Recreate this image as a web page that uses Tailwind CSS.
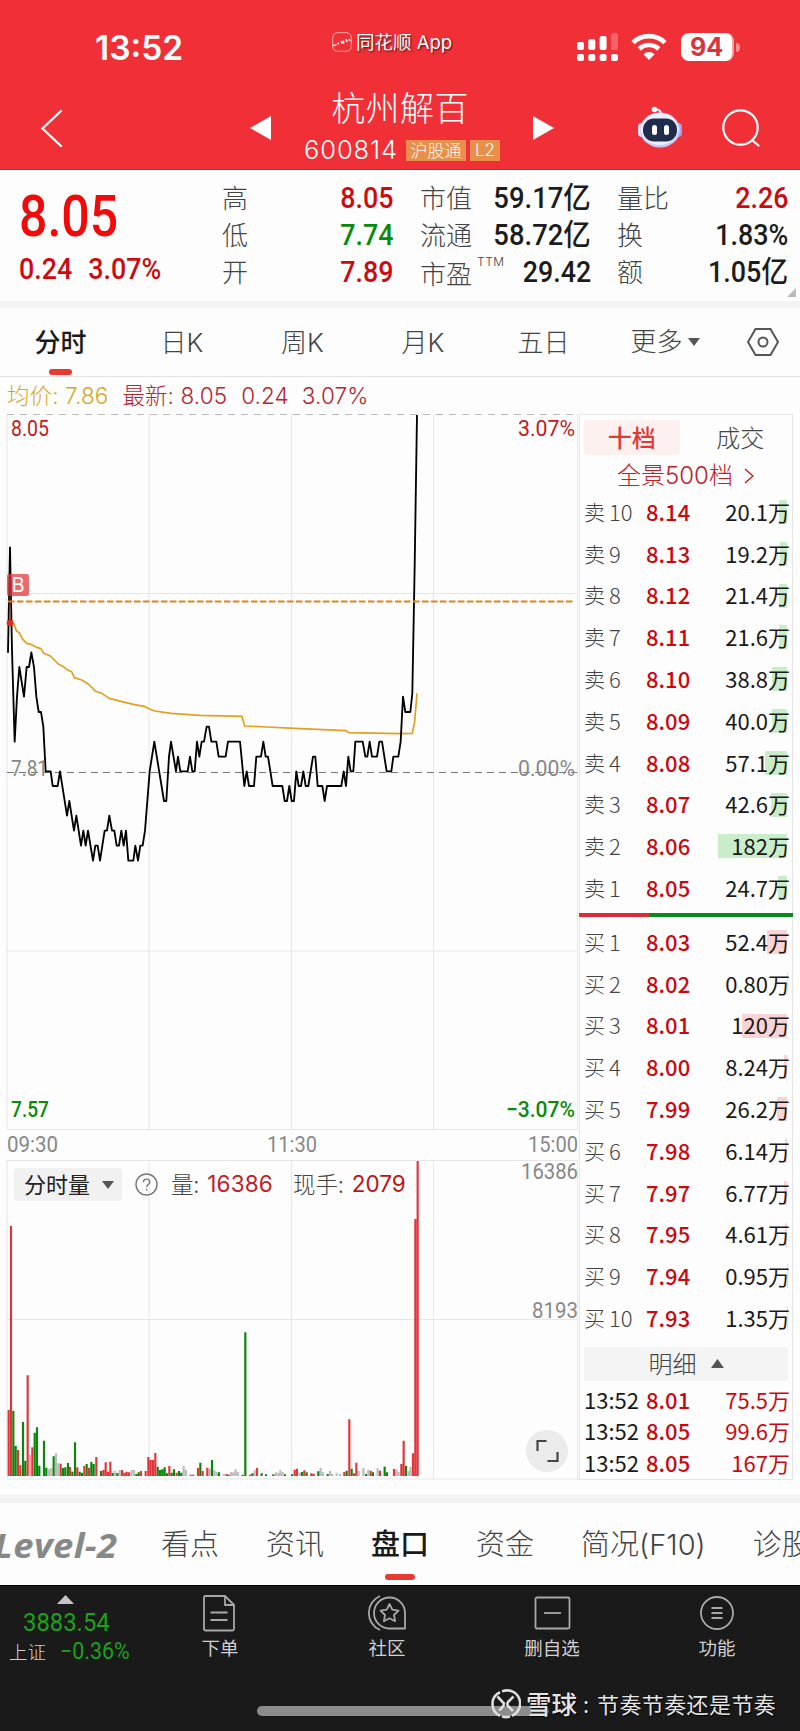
<!DOCTYPE html>
<html lang="zh-CN">
<head>
    <meta charset="UTF-8">
    <meta name="viewport" content="width=device-width, initial-scale=1.0">
    <title>杭州解百 600814</title>
    <script src="https://cdn.jsdelivr.net/npm/@tailwindcss/browser@4"></script>
    <style>
        body { font-family: 'Noto Sans CJK SC', sans-serif; }
        .din { font-family: Roboto, 'Noto Sans CJK SC', sans-serif; }
        .inter { font-family: Inter, 'Noto Sans CJK SC', sans-serif; }
    </style>
</head>
<body class="w-[800px] h-[1731px] overflow-hidden bg-[#fdfdfd] text-[#444]">

    <!-- Header -->
    <header class="h-[170px] bg-[#f03036] border-b border-[#c8282e] text-white">
        <div class="h-[88px] flex items-start">
            <div class="inter w-[332px] pl-[95px] pt-[30px] text-[33.500px] leading-[36px] font-semibold">13:52</div>
            <div class="w-[245px] pt-[30px] flex items-center gap-[4px]">
                <svg class="w-5 h-5" viewBox="0 0 20 20" fill="none" stroke="#fff">
                    <rect x=".7" y=".7" width="18.6" height="18.6" rx="5" stroke-opacity=".6"/>
                    <path d="M1 13.500l3.500-.5M5.500 11l1.500 1M9 9l1.500 2.500M11.500 8.500v3M14 7l1 3M16.500 7.500l2 1" stroke-width="1.600"/>
                </svg>
                <span class="inter text-[18.500px] leading-6 [text-shadow:1px_1px_2px_rgba(0,0,0,.7)]">同花顺 App</span>
            </div>
            <div class="pt-[32px] flex">
                <svg class="w-[42px] h-[30px]" viewBox="0 0 42 30" fill="#fff">
                    <rect x="0" y="10" width="7" height="8" rx="2"/>
                    <rect x="11.3" y="7" width="7" height="11" rx="2"/>
                    <rect x="22.6" y="4" width="7" height="14" rx="2"/>
                    <rect x="34" y="1" width="7" height="17" rx="2" opacity=".25"/>
                    <rect x="0" y="22" width="7" height="7" rx="2"/>
                    <rect x="11.3" y="22" width="7" height="7" rx="2"/>
                    <rect x="22.6" y="22" width="7" height="7" rx="2"/>
                    <rect x="34" y="22" width="7" height="7" rx="2"/>
                </svg>
                <svg class="ml-[12px] w-[36px] h-[28px]" viewBox="0 0 36 28" fill="none" stroke="#fff" stroke-width="4.6">
                    <path d="M2 10.6a23 23 0 0 1 32 0"/>
                    <path d="M8.2 17a14 14 0 0 1 19.600 0"/>
                    <path d="M18 28l-5.600-5.800a8.200 8.200 0 0 1 11.200 0z" fill="#fff" stroke="none"/>
                </svg>
                <div class="inter ml-[14px] mt-px w-[53px] h-[28px] rounded-[8px] bg-white text-[#d9343a] text-[25px] leading-[28px] font-bold text-center border-r-2 border-[#f8a0a3]">94</div>
                <div class="ml-[2px] mt-[11px] w-[4px] h-[9px] rounded-r-full bg-white/45"></div>
            </div>
        </div>
        <div class="h-[80px] flex items-start">
            <svg class="ml-[41px] mt-[21px] w-[22px] h-[38px]" viewBox="0 0 22 38" fill="none" stroke="#fff" stroke-width="2.3" stroke-linecap="round"><path d="M20 2L1.500 19.500l18.500 17.500"/></svg>
            <svg class="ml-[187px] mt-[28px] w-[21px] h-[24px]" viewBox="0 0 21 24" fill="#fff"><path d="M0 12L21 0v24z"/></svg>
            <div class="w-[262px] flex flex-col items-center">
                <h1 class="-ml-[4px] text-[34px] leading-[38px] font-light tracking-[.4px]">杭州解百</h1>
                <div class="mt-[11px] flex items-center">
                    <span class="inter text-[25.500px] leading-[26px] font-light tracking-[.9px]">600814</span>
                    <span class="ml-[8px] w-[60px] h-[21px] bg-[#e8904a] text-[17px] leading-[20px] text-center font-light">沪股通</span>
                    <span class="inter ml-[4px] w-[30px] h-[21px] bg-[#e8904a] text-[17px] leading-[21px] text-center font-light">L2</span>
                </div>
            </div>
            <svg class="mt-[28px] w-[21px] h-[24px]" viewBox="0 0 21 24" fill="#fff"><path d="M21 12L0 0v24z"/></svg>
            <svg class="ml-[83px] mt-[18px] w-[46px] h-[42px]" viewBox="0 0 46 42">
                <path d="M24 8c0-3-2-4.500-5-4.500" fill="none" stroke="#e6ddf8" stroke-width="2"/>
                <circle cx="17.500" cy="3.500" r="2.800" fill="#fff"/>
                <rect x="1" y="17" width="8" height="14" rx="4" fill="#dfe0fb"/>
                <rect x="37" y="17" width="8" height="14" rx="4" fill="#9fa4f4"/>
                <ellipse cx="23" cy="24" rx="20" ry="17.500" fill="#c9c9f8"/>
                <ellipse cx="22.500" cy="23" rx="19" ry="16" fill="#efeffe"/>
                <rect x="6" y="12.500" width="34" height="23" rx="11" fill="#202c4c"/>
                <rect x="15" y="19" width="5" height="10" rx="2.500" fill="#fff"/>
                <rect x="27" y="19" width="5" height="10" rx="2.500" fill="#fff"/>
            </svg>
            <svg class="ml-[38px] mt-[20px] w-[40px] h-[40px]" viewBox="0 0 40 40" fill="none" stroke="#fff" stroke-width="2.200" stroke-linecap="round"><circle cx="19.500" cy="19.500" r="17.200"/><path d="M31 32l6.500 5.500"/></svg>
        </div>
    </header>

    <!-- Quote summary -->
    <section class="relative h-[131px] flex text-[26px] leading-[37px] font-light">
        <div class="din w-[222px] pl-[19px] pt-[17px]">
            <div class="text-[57.5px] leading-[60px] font-medium text-[#f00a0a] origin-left scale-x-[.87]">8.05</div>
            <div class="mt-[3px] text-[29.5px] leading-[38px] font-medium text-[#cc0a10] origin-left scale-x-[.91] whitespace-pre">0.24  <span class="ml-[3px]">3.07%</span></div>
        </div>
        <div class="w-[171px] pt-[10px]">
            <div class="flex justify-between"><span class="-mt-[2px]">高</span><b class="din text-[29.5px] font-medium text-[#cc0a10] origin-right scale-x-[.91]">8.05</b></div>
            <div class="flex justify-between"><span class="-mt-[2px]">低</span><b class="din text-[29.5px] font-medium text-[#0a8a0a] origin-right scale-x-[.91]">7.74</b></div>
            <div class="flex justify-between"><span class="-mt-[2px]">开</span><b class="din text-[29.5px] font-medium text-[#cc0a10] origin-right scale-x-[.91]">7.89</b></div>
        </div>
        <div class="ml-[27px] w-[171px] pt-[10px]">
            <div class="flex justify-between"><span class="-mt-[2px]">市值</span><b class="din text-[29.5px] font-medium text-[#1c1c1c] origin-right scale-x-[.93]">59.17亿</b></div>
            <div class="flex justify-between"><span class="-mt-[2px]">流通</span><b class="din text-[29.5px] font-medium text-[#1c1c1c] origin-right scale-x-[.93]">58.72亿</b></div>
            <div class="flex justify-between"><span class="flex items-start"><span>市盈</span><span class="inter ml-[5px] mt-[-2px] text-[12px] leading-[20px] tracking-[.5px]">TTM</span></span><b class="din text-[29.5px] font-medium text-[#1c1c1c] origin-right scale-x-[.91]">29.42</b></div>
        </div>
        <div class="ml-[26px] w-[171px] pt-[10px]">
            <div class="flex justify-between"><span class="-mt-[2px]">量比</span><b class="din text-[29.5px] font-medium text-[#cc0a10] origin-right scale-x-[.91]">2.26</b></div>
            <div class="flex justify-between"><span class="-mt-[2px]">换</span><b class="din text-[29.5px] font-medium text-[#1c1c1c] origin-right scale-x-[.91]">1.83%</b></div>
            <div class="flex justify-between"><span class="-mt-[2px]">额</span><b class="din text-[29.5px] font-medium text-[#1c1c1c] origin-right scale-x-[.91]">1.05亿</b></div>
        </div>
        <svg class="absolute right-[4px] bottom-[4px] w-[9px] h-[9px]" viewBox="0 0 9 9"><path d="M9 0v9H0z" fill="#bbb"/></svg>
    </section>
    <div class="h-[7px] bg-[#f3f3f3]"></div>

    <!-- Period tabs -->
    <nav class="inter h-[69px] border-b border-[#e4e4e4] flex text-[26px] leading-[70px] font-light text-center">
        <div class="relative w-[121px] font-medium text-[#1a1a1a]">分时<i class="absolute left-[49px] bottom-[1px] w-[23px] h-[6px] rounded-full bg-[#e93a32]"></i></div>
        <div class="w-[122px]">日K</div>
        <div class="w-[119px]">周K</div>
        <div class="w-[122px]">月K</div>
        <div class="w-[119px]">五日</div>
        <div class="w-[124px] flex justify-center items-center gap-[5px]">更多<svg class="w-[12px] h-[8px]" viewBox="0 0 12 8"><path d="M0 0h12L6 8z" fill="#555"/></svg></div>
        <div class="w-[72px] flex justify-center items-center">
            <svg class="w-[32px] h-[28px]" viewBox="0 0 32 28" fill="none" stroke="#555" stroke-width="2"><path d="M8.500 1h15L31 14l-7.500 13h-15L1 14z"/><circle cx="16" cy="14" r="4.500"/></svg>
        </div>
    </nav>

    <div class="inter h-[37px] pl-[7px] flex text-[22.500px] leading-[38px] font-light">
        <span class="text-[#d6a91c] whitespace-pre tracking-[.1px]">均价: 7.86</span>
        <span class="ml-[14px] text-[#b32630] whitespace-pre tracking-[.1px]">最新: 8.05</span>
        <span class="ml-[14px] text-[#b32630] tracking-[.1px]">0.24</span>
        <span class="ml-[13px] text-[#b32630] tracking-[.1px]">3.07%</span>
    </div>

    <main class="flex h-[1066px]">
        <!-- Intraday price and volume -->
        <div class="relative w-[579px]">
            <svg class="din block w-[579px] h-[1066px] overflow-visible" viewBox="0 414 579 1066" fill="none">
                <g stroke="#e6e6e6">
                    <path d="M7 414V1129.500M149 414V1129.500M291.500 414V1129.500M433.500 414V1129.500M577.500 414V1129.500"/>
                    <path d="M7 593.500H577M7 951H577M7 1129.500H577"/>
                    <path d="M7 1160V1479M149 1160V1479M291.500 1160V1479M433.500 1160V1479M577.500 1160V1479"/>
                    <path d="M7 1160.500H577M7 1319.500H577M7 1479H579"/>
                </g>
                <path d="M7 414.500H577" stroke="#bbb" stroke-dasharray="7 6"/>
                <path d="M7 772.500H577" stroke="#777" stroke-dasharray="7 5"/>

                <g transform="translate(0 400) scale(.33333)" stroke-linejoin="round">
                    <polyline stroke="#e0a020" stroke-width="5" points="30,655 40,668 50,694 58,698 66,715 80,730 95,734 110,742 123,746 131,760 151,768 175,792 190,800 204,811 215,815 223,833 245,840 265,852 287,874 305,880 328,895 375,907 400,913 433,919 450,928 465,933 513,940 600,946 726,949 734,978 800,981 900,986 1038,992 1046,998 1200,1001 1237,1000 1244,965 1251,880"/>
                    <polyline stroke="#000" stroke-width="5.500" points="24,758 30,442 36,750 44,1025 51,890 58,801 72,890 80,801 87,801 94,757 102,801 109,890 116,936 123,936 130,980 137,1114 152,1114 158,1158 173,1158 180,1114 201,1247 208,1203 222,1292 229,1247 243,1337 250,1292 257,1337 264,1292 279,1382 286,1337 293,1337 300,1382 314,1292 321,1292 328,1247 336,1292 343,1292 350,1337 357,1337 364,1292 371,1337 378,1292 385,1382 400,1382 406,1337 414,1382 421,1337 428,1337 435,1292 449,1114 463,1025 492,1203 499,1203 507,1070 513,1025 528,1114 534,1070 541,1114 563,1114 570,1070 577,1114 584,1114 591,1025 598,1070 605,1025 612,1025 620,980 627,980 634,1025 649,1025 656,1070 677,1070 684,1025 720,1025 733,1158 740,1114 747,1158 762,1158 769,1070 783,1070 790,1025 797,1070 804,1070 818,1158 847,1158 854,1203 861,1203 868,1158 875,1203 882,1203 889,1114 896,1158 903,1158 910,1114 917,1158 925,1158 939,1070 946,1070 953,1158 967,1158 974,1203 981,1158 1024,1158 1031,1114 1038,1158 1045,1070 1052,1114 1060,1114 1066,1025 1088,1025 1096,1070 1102,1070 1109,1025 1116,1070 1131,1070 1138,1025 1146,1025 1160,1114 1174,1114 1180,1070 1195,1070 1202,1025 1209,890 1216,936 1231,936 1237,880 1244,500 1251,45"/>
                </g>
                <path d="M8 601.500H575" stroke="#e0851c" stroke-width="1.800" stroke-dasharray="6.500 2.500"/>

                <!-- buy marker -->
                <rect x="7" y="574" width="22" height="22" rx="2" fill="#e0393e" fill-opacity=".75"/>
                <text x="11.500" y="592" font-size="20" fill="#fff" class="inter">B</text>
                <path d="M10 596V622" stroke="#d33" stroke-opacity=".5"/>
                <circle cx="10" cy="623" r="3.300" fill="#e42a22"/>

                <g font-size="22">
                    <text x="11" y="436" textLength="38" lengthAdjust="spacingAndGlyphs" fill="#c01a20">8.05</text>
                    <text x="518" y="436" textLength="57" lengthAdjust="spacingAndGlyphs" fill="#c01a20">3.07%</text>
                    <text x="11" y="776" textLength="37" lengthAdjust="spacingAndGlyphs" fill="#888">7.81</text>
                    <text x="518" y="776" textLength="57" lengthAdjust="spacingAndGlyphs" fill="#888">0.00%</text>
                    <text x="11" y="1116.500" textLength="38" lengthAdjust="spacingAndGlyphs" font-weight="500" fill="#0a8a0a">7.57</text>
                    <text x="506" y="1116.500" textLength="69" lengthAdjust="spacingAndGlyphs" font-weight="500" fill="#0a8a0a">−3.07%</text>
                    <text x="7" y="1152" textLength="51" lengthAdjust="spacingAndGlyphs" fill="#888">09:30</text>
                    <text x="267" y="1152" textLength="50" lengthAdjust="spacingAndGlyphs" fill="#888">11:30</text>
                    <text x="528" y="1152" textLength="50" lengthAdjust="spacingAndGlyphs" fill="#888">15:00</text>
                    <text x="521" y="1179" textLength="57" lengthAdjust="spacingAndGlyphs" fill="#888">16386</text>
                    <text x="532" y="1318" textLength="46" lengthAdjust="spacingAndGlyphs" fill="#888">8193</text>
                </g>

                <!-- volume bars: up / down / flat -->
                <g transform="translate(0 1090) scale(.33333)" stroke-width="6.500">
                    <path stroke="#bbb" d="M147 1158V1138M154 1158V1134M168 1158V1090M175 1158V1120M345 1158V1143M359 1158V1140M395 1158V1140M402 1158V1140M551 1158V1128M558 1158V1139M629 1158V1136M643 1158V1141M650 1158V1145M672 1158V1152M693 1158V1147M700 1158V1147M707 1158V1138M714 1158V1146M764 1158V1141M828 1158V1147M835 1158V1149M841 1158V1141M848 1158V1147M899 1158V1148M962 1158V1134M969 1158V1147M990 1158V1143M997 1158V1151M1010 1158V1150M1020 1158V1152M1076 1158V1143M1090 1158V1134M1105 1158V1139M1133 1158V1135M1189 1158V1138M1196 1158V1146M1226 1158V1143M1232 1158V1130"/>
                    <path stroke="#f3a6a8" d="M90 1158V1095"/>
                    <path stroke="#0a860a" d="M40 1158V962M47 1158V1068M69 1158V996M76 1158V1112M104 1158V1028M111 1158V1012M118 1158V1127M132 1158V1052M139 1158V1133M161 1158V1099M189 1158V1134M196 1158V1132M204 1158V1119M217 1158V1145M225 1158V1057M239 1158V1145M246 1158V1148M260 1158V1122M274 1158V1116M281 1158V1122M303 1158V1143M338 1158V1149M352 1158V1149M409 1158V1152M416 1158V1147M473 1158V1130M480 1158V1140M487 1158V1138M494 1158V1132M501 1158V1150M515 1158V1148M522 1158V1138M537 1158V1143M544 1158V1148M601 1158V1118M636 1158V1110M657 1158V1147M728 1158V1154M736 1158V727M757 1158V1150M785 1158V1150M798 1158V1153M820 1158V1153M855 1158V1153M876 1158V1153M906 1158V1146M920 1158V1147M955 1158V1144M983 1158V1152M1040 1158V1142M1055 1158V1136M1098 1158V1152M1119 1158V1147M1154 1158V1130M1161 1158V1147M1218 1158V1128"/>
                    <path stroke="#e2353a" d="M26 1158V960M33 1158V408M54 1158V1080M61 1158V1126M83 1158V856M97 1158V1072M182 1158V1121M210 1158V1131M232 1158V1132M253 1158V1128M267 1158V1133M289 1158V1101M310 1158V1140M317 1158V1117M324 1158V1145M331 1158V1115M366 1158V1140M373 1158V1148M380 1158V1145M387 1158V1147M423 1158V1143M437 1158V1143M445 1158V1101M452 1158V1110M459 1158V1110M466 1158V1089M508 1158V1128M530 1158V1148M572 1158V1154M580 1158V1154M594 1158V1134M608 1158V1143M622 1158V1133M680 1158V1152M686 1158V1154M750 1158V1154M771 1158V1134M884 1158V1139M891 1158V1136M913 1158V1141M934 1158V1150M941 1158V1151M1033 1158V1146M1048 1158V988M1062 1158V1150M1069 1158V1118M1112 1158V1142M1140 1158V1142M1182 1158V1137M1204 1158V1122M1211 1158V1052M1239 1158V1090M1246 1158V387M1253 1158V213"/>
                </g>
            </svg>

            <!-- volume indicator bar, floats over the volume plot -->
            <div class="absolute left-[14px] top-[754px] flex items-center text-[22.500px] leading-[32px] font-light">
                <div class="w-[108px] h-[33px] pl-[10px] rounded-[4px] bg-[#f1f1f1] text-[22px] text-[#222] font-normal flex items-center gap-[12px]"><span class="-mt-[4px]">分时量</span><svg class="w-[12px] h-[8px]" viewBox="0 0 12 8"><path d="M0 0h12L6 8z" fill="#555"/></svg></div>
                <svg class="ml-[13px] w-[23px] h-[23px]" viewBox="0 0 23 23" fill="none" stroke="#777" stroke-width="1.400"><circle cx="11.500" cy="11.500" r="10.500"/><path d="M8.300 9.200c0-4.200 6.500-4 6.500 0 0 2.300-3.200 2.400-3.200 5M11.600 15.700v1.700"/></svg>
                <span class="ml-[13px] -mt-[3px]">量:</span>
                <span class="inter ml-[8px] -mt-px font-normal text-[#c0202a] tracking-[.2px]">16386</span>
                <span class="ml-[20px] -mt-[3px]">现手:</span>
                <span class="inter ml-[8px] -mt-px font-normal text-[#c01018]">2079</span>
            </div>
            <div class="absolute left-[526px] top-[1016px] w-[42px] h-[42px] rounded-full bg-[#ebebeb]">
                <svg class="w-[42px] h-[42px]" viewBox="0 0 42 42" fill="none" stroke="#444" stroke-width="2.200"><path d="M11.500 21v-10h9M31.500 22v9h-10"/></svg>
            </div>
        </div>

        <!-- Order book -->
        <aside class="w-[214px] border border-[#e6e6e6] flex flex-col">
            <div class="mt-[5px] px-[4px] flex text-[24px] leading-[33px] text-center">
                <div class="w-[97px] h-[35px] rounded-[3px] bg-[#fdf1f0] font-medium text-[#e03a35]">十档</div>
                <div class="ml-[13px] w-[97px] font-light">成交</div>
            </div>
            <div class="inter h-[38px] pl-[37px] pt-[4px] flex items-center gap-[11px] text-[24px] font-light text-[#bf2029]">
                <span class="whitespace-nowrap">全景500档</span>
                <svg class="w-[10px] h-[16px]" viewBox="0 0 10 16" fill="none" stroke="#bf2029" stroke-width="1.400"><path d="M1 1l8 7-8 7"/></svg>
            </div>
            <div id="asks" class="mt-[-3px]"></div>
            <div class="mt-[5px] -mx-px h-[4px] flex"><i class="w-[70px] bg-[#d92b3a]"></i><i class="flex-1 bg-[#0a8a1a]"></i></div>
            <div id="bids" class="mt-[3px]"></div>
            <div class="mt-[9px] mx-[4px] h-[34px] bg-[#f4f4f4] flex items-center justify-center gap-[14px] text-[24px] leading-[30px] font-light"><span class="-mt-[2px]">明细</span><svg class="w-[13px] h-[9px]" viewBox="0 0 13 9"><path d="M0 9h13L6.500 0z" fill="#555"/></svg></div>
            <div id="trades" class="mt-[2px]"></div>
        </aside>
    </main>

    <div class="mt-[15px] h-[8px] bg-[#f3f3f3]"></div>

    <!-- Section tabs -->
    <nav class="inter h-[82px] flex text-[29px] leading-[84px] font-light whitespace-nowrap overflow-hidden">
        <div class="w-[161px] shrink-0 flex justify-end pr-[44px] text-[#888] font-bold italic [font-family:'Open_Sans'] text-[34px] tracking-[.4px]"><span class="origin-right scale-x-[1.07]">Level-2</span></div>
        <div class="flex gap-[47px]">
            <span>看点</span>
            <span>资讯</span>
            <span class="relative font-medium text-[#1a1a1a]">盘口<i class="absolute left-[14px] top-[71px] w-[30px] h-[6px] rounded-full bg-[#e93a32]"></i></span>
            <span>资金</span>
            <span>简况(F10)</span>
            <span>诊股</span>
        </div>
    </nav>

    <!-- Bottom bar -->
    <footer class="relative h-[146px] bg-[#1a1a1a] border-t border-black text-[#d0d0d0] flex text-[18.500px] leading-[24px]">
        <div class="w-[136px] pt-[9px]">
            <svg class="ml-[57px] w-[17px] h-[9px]" viewBox="0 0 17 9"><path d="M0 9h17L8.500 0z" fill="#c4c4c4"/></svg>
            <div class="din ml-[23px] mt-[5px] text-[26.500px] leading-[26px] text-[#1ea01e] origin-left scale-x-[.9]">3883.54</div>
            <div class="ml-[9px] mt-[4px] flex items-center font-light"><span class="-mt-[3px] w-[51px]">上证</span><span class="din text-[23px] font-normal leading-[26px] text-[#1ea01e] origin-left scale-x-[.93]">−0.36%</span></div>
        </div>
        <div class="w-[168px] pt-[8px] flex flex-col items-center">
            <svg class="w-[34px] h-[38px] -ml-[3px]" viewBox="0 0 34 38" fill="none" stroke="#a8a8a8" stroke-width="1.800" stroke-linejoin="round"><path d="M3.500 2H23l9 9v24a1.500 1.500 0 0 1-1.500 1.500h-27A1.500 1.500 0 0 1 2 35V3.500A1.500 1.500 0 0 1 3.500 2zM23 2v9h9M8.500 18.500H25.500M8.500 26H25.500"/></svg>
            <span class="mt-[3px]">下单</span>
        </div>
        <div class="w-[166px] pt-[8px] flex flex-col items-center">
            <svg class="w-[40px] h-[38px] -ml-[1px]" viewBox="0 0 40 38" fill="none" stroke="#a8a8a8" stroke-width="1.800" stroke-linejoin="round"><path d="M13 2A18.500 18.500 0 0 0 13 36M38 34.500H22A15.500 15.500 0 1 1 38 19z"/><path d="M22.500 10l2.800 5.700 6.200.9-4.500 4.400 1.100 6.200-5.600-2.900-5.600 2.900 1.100-6.200-4.500-4.400 6.200-.9z"/></svg>
            <span class="mt-[3px]">社区</span>
        </div>
        <div class="w-[164px] pt-[8px] flex flex-col items-center">
            <svg class="w-[37px] h-[38px]" viewBox="0 0 37 38" fill="none" stroke="#a8a8a8" stroke-width="1.800"><rect x="1.500" y="3.500" width="34" height="31" rx="1.500"/><path d="M10 19H27"/></svg>
            <span class="mt-[3px]">删自选</span>
        </div>
        <div class="w-[166px] pt-[8px] flex flex-col items-center">
            <svg class="w-[36px] h-[38px]" viewBox="0 0 36 38" fill="none" stroke="#a8a8a8" stroke-width="1.800"><circle cx="18" cy="19" r="16"/><path d="M12.500 14H23.500M12.500 19H23.500M12.500 24H23.500"/></svg>
            <span class="mt-[3px]">功能</span>
        </div>

        <div class="absolute left-[257px] top-[120px] w-[292px] h-[10px] rounded-full bg-[#8c8c8c]"></div>
        <div class="absolute left-[491px] top-[103px] flex items-center text-[22px] leading-[30px] text-[#e4e4e4] whitespace-nowrap [text-shadow:1px_1px_1px_#000]">
            <svg class="w-[30px] h-[30px]" viewBox="0 0 30 30" fill="none" stroke="#ddd" stroke-width="2.600"><path d="M9 3.200A13 13 0 0 0 9 26.800M11 2.400A13 13 0 0 1 21 26.700M19 27.500A13 13 0 0 1 11 27.400"/><path d="M6.500 7.500L13 14.500C13 17 11 19 8 21.500M22.500 7.500L17 13c-1 2-1 3 0 4l5 5"/></svg>
            <span class="ml-[5px] -mt-[3px] text-[25.500px] font-medium">雪球</span>
            <span class="ml-[6px] -mt-[2px] w-[14px]">:</span>
            <span class="-mt-[2px] tracking-[.4px]">节奏节奏还是节奏</span>
        </div>
    </footer>

    <script>
        const asks = [
            ['10', '8.14', '20.1'], ['9', '8.13', '19.2'], ['8', '8.12', '21.4'], ['7', '8.11', '21.6'], ['6', '8.10', '38.8'],
            ['5', '8.09', '40.0'], ['4', '8.08', '57.1'], ['3', '8.07', '42.6'], ['2', '8.06', '182'], ['1', '8.05', '24.7']
        ];
        const bids = [
            ['1', '8.03', '52.4'], ['2', '8.02', '0.80'], ['3', '8.01', '120'], ['4', '8.00', '8.24'], ['5', '7.99', '26.2'],
            ['6', '7.98', '6.14'], ['7', '7.97', '6.77'], ['8', '7.95', '4.61'], ['9', '7.94', '0.95'], ['10', '7.93', '1.35']
        ];
        const trades = [['8.01', '75.5'], ['8.05', '99.6'], ['8.05', '167']];
        const pxPerWan = 0.379;

        function bookRow(side, barClass, [level, price, volume]) {
            return `
                <div class="relative h-[41.800px] pl-[4px] pr-[2px] flex items-center text-[22px] leading-[30px]">
                    <i class="absolute right-[5px] top-[10px] h-[24px] ${barClass}" style="width:${(volume * pxPerWan).toFixed(1)}px"></i>
                    <span class="w-[25px] font-light text-[21px]">${side}</span>
                    <span class="w-[37px] font-light">${level}</span>
                    <span class="font-medium text-[#c80a10]">${price}</span>
                    <span class="relative ml-auto text-[#1a1a1a]">${volume}万</span>
                </div>`;
        }

        document.getElementById('asks').innerHTML = asks.map(r => bookRow('卖', 'bg-[#c9ecc9]', r)).join('');
        document.getElementById('bids').innerHTML = bids.map(r => bookRow('买', 'bg-[#f9d4d7]', r)).join('');
        document.getElementById('trades').innerHTML = trades.map(([price, volume]) => `
            <div class="h-[31.500px] pl-[4px] pr-[2px] flex items-center text-[22px] leading-[30px] text-[#c80a10]">
                <span class="w-[62px] text-[#1a1a1a]">13:52</span>
                <span class="font-medium">${price}</span>
                <span class="ml-auto">${volume}万</span>
            </div>`).join('');
    </script>
</body>
</html>
